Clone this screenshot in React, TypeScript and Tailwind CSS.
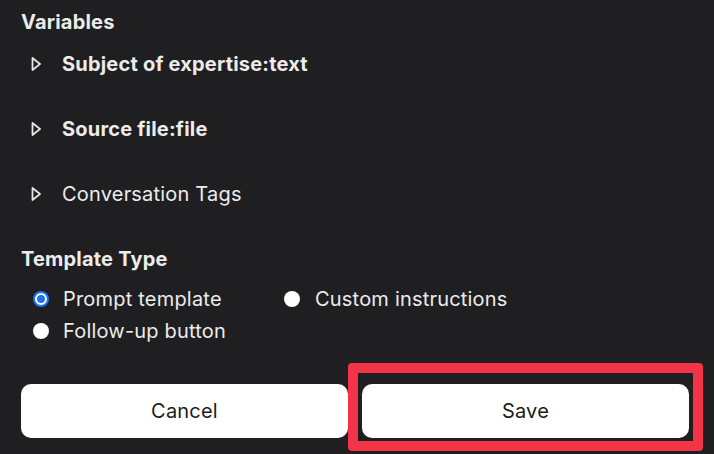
import React from "react";

const variables = [
  { label: "Subject of expertise:text", bold: true },
  { label: "Source file:file", bold: true },
  { label: "Conversation Tags", bold: false },
];

function Caret() {
  return (
    <svg width="10" height="14" viewBox="0 0 10 14" className="shrink-0">
      <path
        d="M1.5 1 L9 7 L1.5 13 Z"
        fill="none"
        stroke="#e6e6e6"
        strokeWidth="1.8"
        strokeLinejoin="round"
      />
    </svg>
  );
}

function Radio({ checked }: { checked?: boolean }) {
  if (checked) {
    return (
      <span className="flex h-4 w-4 shrink-0 items-center justify-center rounded-full bg-[#1a73f5]">
        <span className="h-3 w-3 rounded-full border-2 border-white bg-[#1a73f5]" />
      </span>
    );
  }
  return <span className="h-4 w-4 shrink-0 rounded-full bg-white" />;
}

export default function App() {
  return (
    <div
      className="h-[454px] w-[714px] overflow-hidden bg-[#1f1f21] tracking-[0.2px] text-[#ececec]"
      style={{ fontFamily: "Inter, 'Noto Sans', sans-serif" }}
    >
      <div className="px-[21px] pt-[11px]">
        {/* Variables */}
        <h2 className="text-[20px] font-bold leading-[22px]">Variables</h2>
        <div className="mt-[20px] space-y-[43px] pl-[10px]">
          {variables.map((v) => (
            <div key={v.label} className="flex h-[22px] items-center gap-[21px]">
              <Caret />
              <span
                className={
                  v.bold
                    ? "text-[20px] font-bold leading-[22px]"
                    : "text-[20px] font-normal leading-[22px]"
                }
              >
                {v.label}
              </span>
            </div>
          ))}
        </div>

        {/* Template Type */}
        <h2 className="mt-[43px] text-[20px] font-bold leading-[22px]">
          Template Type
        </h2>
        <div className="mt-[18px] grid grid-cols-[251px_1fr] gap-y-[10px] pl-[12px]">
          <label className="flex h-[22px] items-center gap-[14px] text-[20px]">
            <Radio checked />
            Prompt template
          </label>
          <label className="flex h-[22px] items-center gap-[15px] text-[20px]">
            <Radio />
            Custom instructions
          </label>
          <label className="flex h-[22px] items-center gap-[14px] text-[20px]">
            <Radio />
            Follow-up button
          </label>
        </div>

        {/* Actions */}
        <div className="mt-[42px] flex gap-[14px] pr-[4px]">
          <button className="h-[54px] flex-1 rounded-[10px] bg-white text-[20px] text-[#1c1c1c]">
            Cancel
          </button>
          <div className="relative flex-1">
            <button className="h-[54px] w-full rounded-[10px] bg-white text-[20px] text-[#1c1c1c]">
              Save
            </button>
            <div className="pointer-events-none absolute -bottom-[13px] -left-[14px] -right-[14px] -top-[21px] rounded-[4px] border-[10px] border-[#f33448]" />
          </div>
        </div>
      </div>
    </div>
  );
}
